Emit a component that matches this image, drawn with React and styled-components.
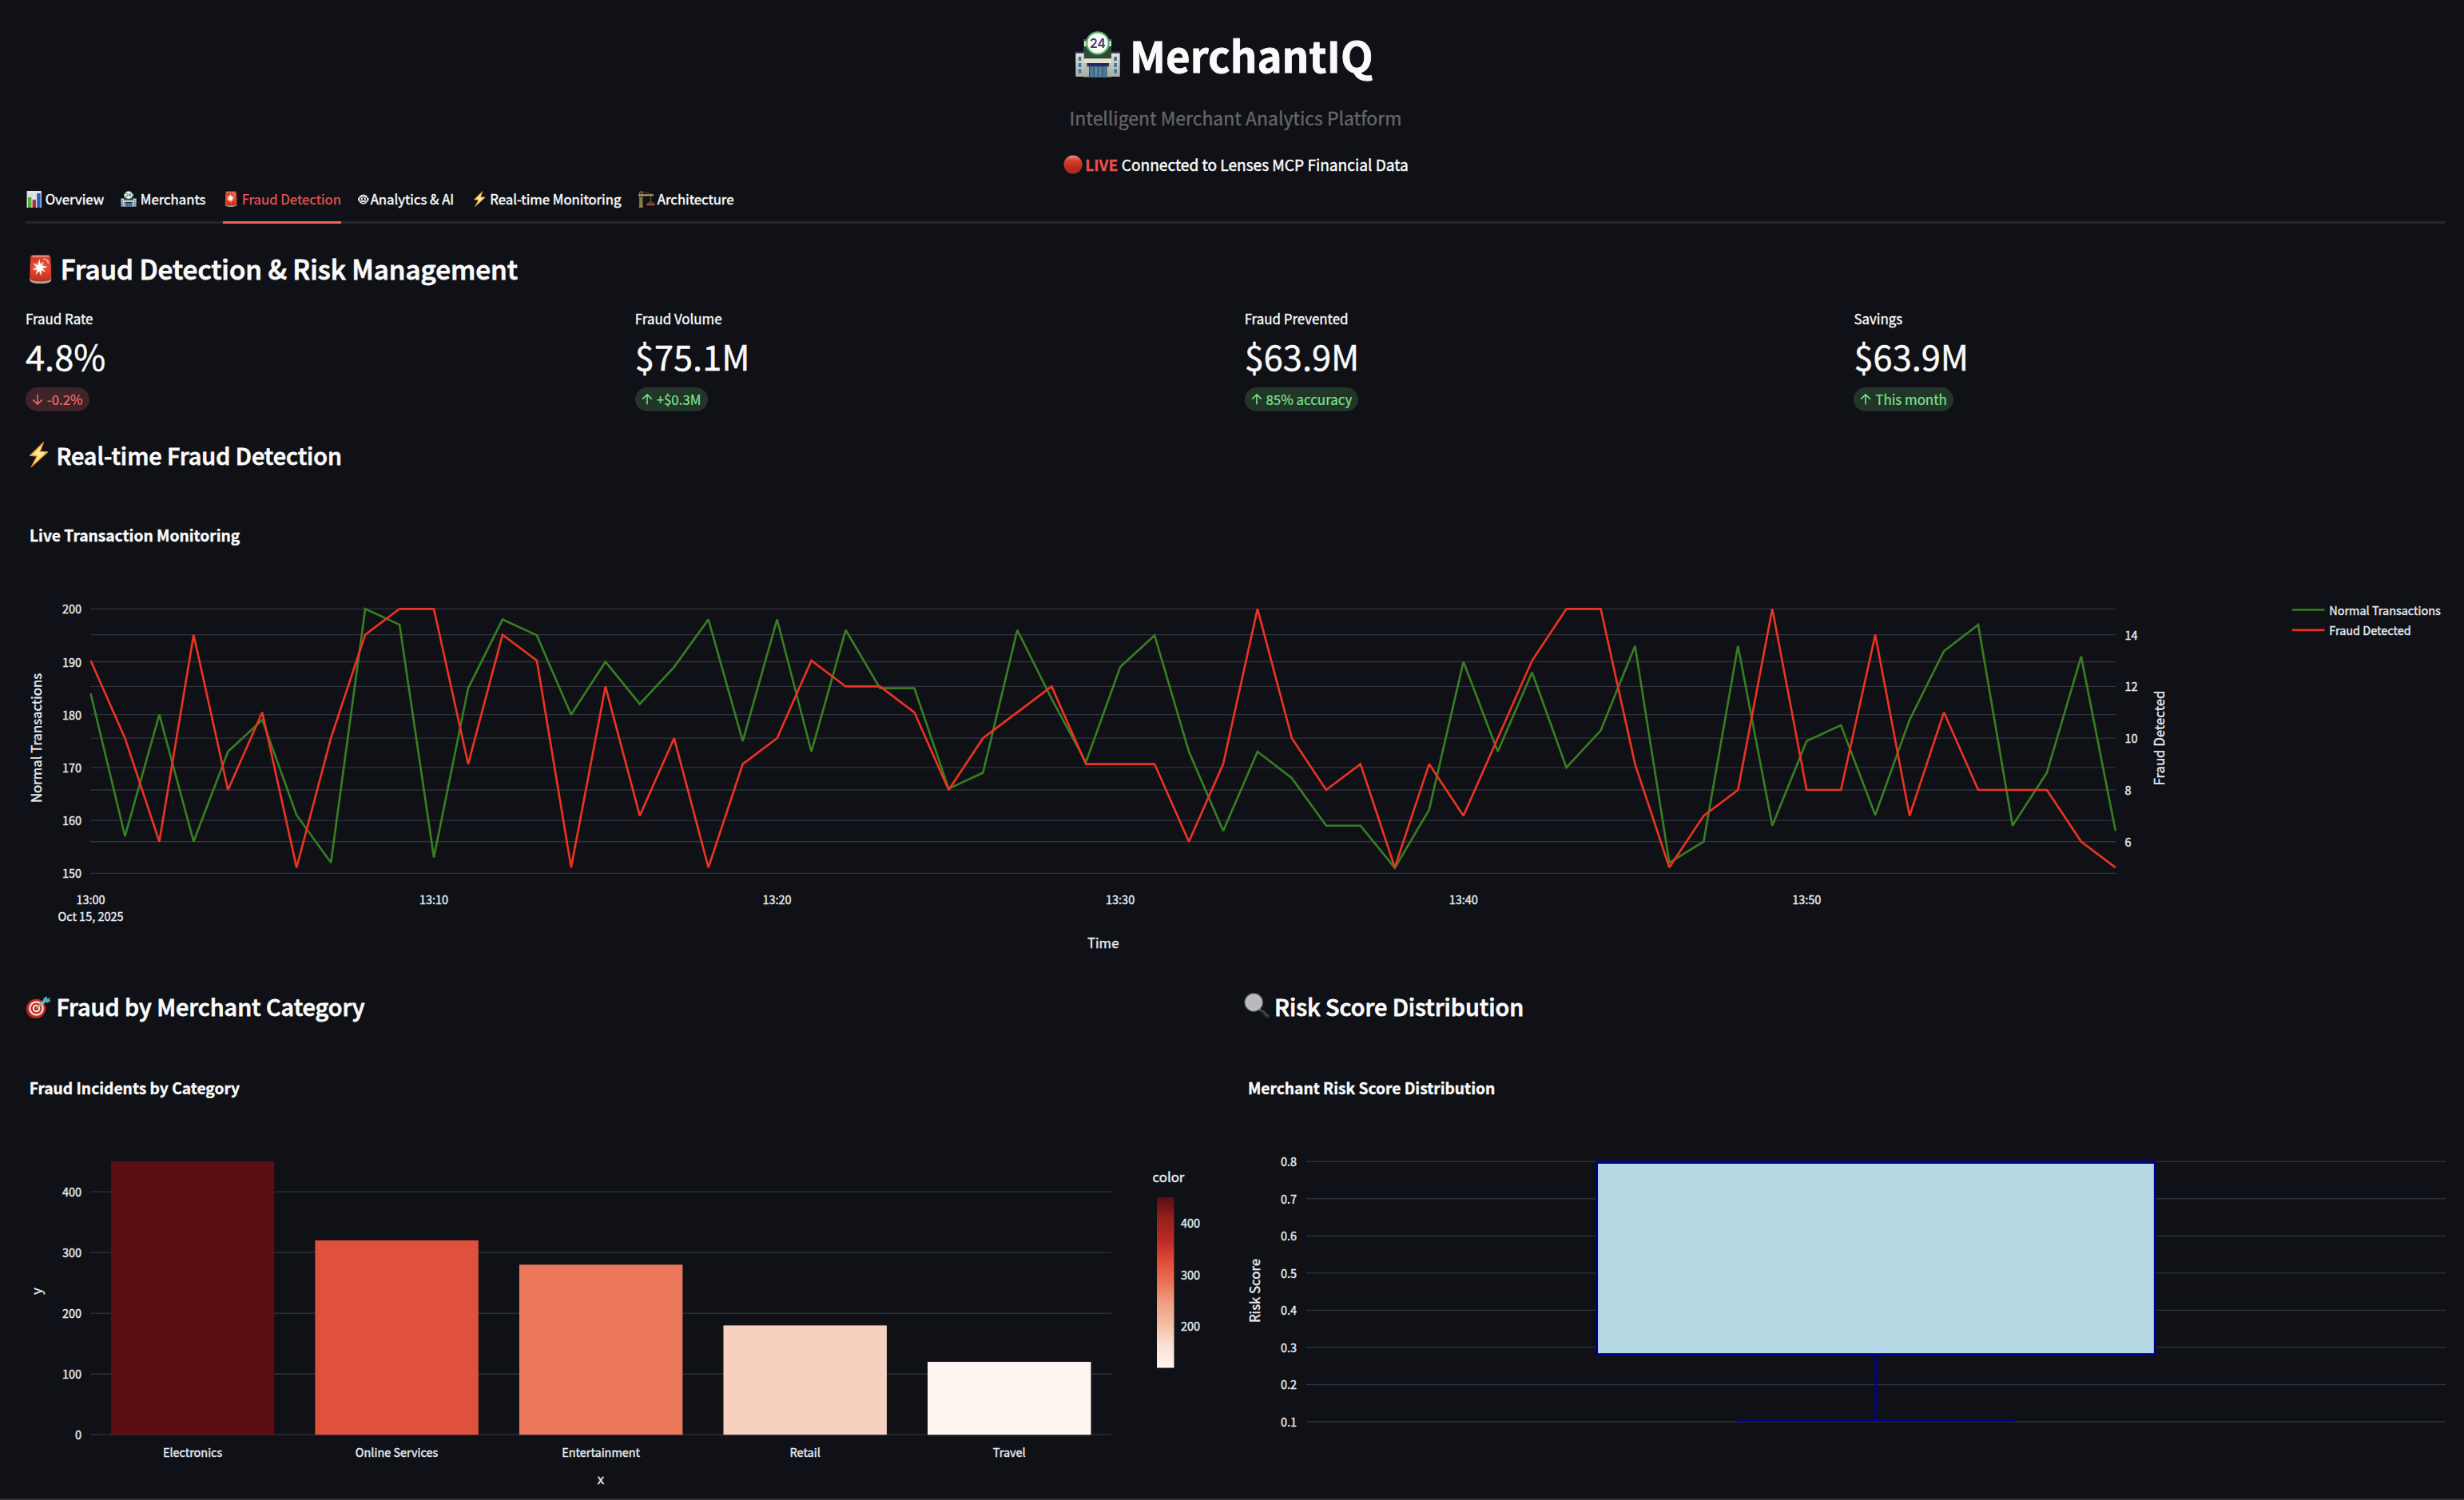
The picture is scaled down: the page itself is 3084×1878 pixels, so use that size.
import React from 'react';
import styled, { createGlobalStyle } from 'styled-components';

const FONT = '"Noto Sans CJK SC", "Noto Sans", sans-serif';

const GlobalStyle = createGlobalStyle`
  * { box-sizing: border-box; }
  body {
    margin: 0;
    background: #0f1116;
    color: #fafafa;
    font-family: ${FONT};
    overflow: hidden;
  }
  h1, h2, h3, p { margin: 0; font-weight: inherit; }
`;

/* ---------- page parts ---------- */

const Page = styled.main`
  display: flex;
  flex-direction: column;
  height: 1878px;
`;

const Content = styled.div`
  flex: 1;
  min-height: 0;
  padding: 33px 24px 0 32px;
  overflow: hidden;
`;

const BottomEdge = styled.footer`
  flex: none;
  height: 2px;
  background: #2f2f30;
`;

const Header = styled.header`
  display: flex;
  flex-direction: column;
  align-items: center;
`;

const Title = styled.h1`
  display: flex;
  align-items: center;
  gap: 10.6px;
  height: 70px;
  padding-right: 28px;
  font-size: 52.7px;
  line-height: 70px;
  font-weight: 700;
  white-space: nowrap;
  -webkit-text-stroke: 0.8px currentColor;
`;

const Subtitle = styled.p`
  margin-top: 28px;
  padding-left: 1px;
  font-size: 22.95px;
  line-height: 32px;
  color: #666666;
  -webkit-text-stroke: 0.35px currentColor;
`;

const LiveLine = styled.p`
  display: flex;
  align-items: center;
  margin-top: 26.6px;
  padding-left: 1.5px;
  font-size: 19.1px;
  line-height: 32px;
  -webkit-text-stroke: 0.45px currentColor;
`;

const LiveTag = styled.strong`
  margin: 0 4.6px 0 3.6px;
  color: #eb5048;
  font-weight: 700;
  -webkit-text-stroke: 0.3px currentColor;
`;

const Tabs = styled.nav`
  display: flex;
  gap: 21.3px;
  height: 58.4px;
  width: 3028px;
  box-shadow: inset 0 -3px 0 #26272e;
`;

const Tab = styled.a`
  display: flex;
  align-items: center;
  gap: ${(p) => p.$gap ?? 4}px;
  border-bottom: 3px solid ${(p) => (p.$active ? '#ee6560' : 'transparent')};
  color: ${(p) => (p.$active ? '#ee5550' : '#fafafa')};
  font-size: 16.75px;
  white-space: nowrap;
  -webkit-text-stroke: ${(p) => (p.$active ? 0.25 : 0.45)}px currentColor;
`;

const SectionTitle = styled.h2`
  display: flex;
  align-items: center;
  gap: 6.7px;
  margin-top: 34.5px;
  height: 44px;
  font-size: 33.2px;
  line-height: 44px;
  font-weight: 500;
  -webkit-text-stroke: 0.9px currentColor;
`;

const Subheading = styled.h3`
  display: flex;
  align-items: center;
  gap: 6.4px;
  height: 40px;
  padding-bottom: 1px;
  font-size: 28.8px;
  line-height: 39px;
  font-weight: 500;
  -webkit-text-stroke: 0.8px currentColor;
`;

const Metrics = styled.section`
  display: grid;
  grid-template-columns: repeat(4, 1fr);
  gap: 21.33px;
  width: 3030px;
  margin: 26px 0 35px;
`;

const Metric = styled.div`
  display: flex;
  flex-direction: column;
  align-items: flex-start;
`;

const MetricLabel = styled.span`
  padding-top: 1px;
  font-size: 16.9px;
  line-height: 28px;
  -webkit-text-stroke: 0.35px currentColor;
`;

const MetricValue = styled.span`
  margin-top: 2.5px;
  font-size: 43.4px;
  line-height: 58px;
  -webkit-text-stroke: 0.4px currentColor;
`;

const Delta = styled.span`
  display: flex;
  align-items: center;
  gap: 4.8px;
  height: 30px;
  margin-top: 11px;
  padding: 0 8px;
  border-radius: 15px;
  font-size: 16.9px;
  color: ${(p) => (p.$down ? '#ee6b6b' : '#7ce38b')};
  background: ${(p) => (p.$down ? '#3e2428' : '#213629')};
  -webkit-text-stroke: 0.2px currentColor;
`;

const Panels = styled.section`
  display: grid;
  grid-template-columns: repeat(2, 1fr);
  gap: 21.33px;
  width: 3028px;
`;

const Chart = styled.svg`
  display: block;
  overflow: visible;
  font-family: ${FONT};
`;

const ChartTitle = styled.text`
  font-size: 19.2px;
  font-weight: 700;
  fill: #fafafa;
  stroke: #fafafa;
  stroke-width: 0.35px;
`;

const Tick = styled.text`
  font-size: 14.45px;
  fill: #e6eaf1;
  stroke: #e6eaf1;
  stroke-width: 0.4px;
`;

const AxisTitle = styled(Tick)`
  font-size: 16.8px;
`;

const Grid = styled.line`
  stroke: #31333f;
  stroke-width: 1.33px;
`;

const Icon = styled.svg`
  display: block;
  flex: none;
`;

/* ---------- icons ---------- */

const StoreIcon = ({ size }) => (
  <Icon width={size} height={size} viewBox="0 0 57 58">
    <defs>
      <linearGradient id="wall" x1="0" y1="0" x2="0" y2="1">
        <stop offset="0" stopColor="#e6e6da" />
        <stop offset="1" stopColor="#a9aca6" />
      </linearGradient>
    </defs>
    <rect x="0.8" y="27" width="11" height="30" fill="url(#wall)" />
    <rect x="45" y="27" width="11.2" height="30" fill="url(#wall)" />
    <rect x="0" y="25.6" width="12" height="2.2" fill="#35346a" />
    <rect x="45" y="25.6" width="12" height="2.2" fill="#35346a" />
    <rect x="11.3" y="11" width="34.2" height="46.5" fill="url(#wall)" />
    <rect x="10.8" y="10" width="35.4" height="2.4" fill="#4a4d78" />
    <rect x="11.3" y="19" width="34.2" height="15.5" fill="#2f4a35" />
    <rect x="11.3" y="34.5" width="34.2" height="5.5" fill="#e2e2d2" />
    <rect x="17.5" y="43" width="22.5" height="14.8" fill="#2d4a5e" />
    <rect x="18.6" y="43" width="4.6" height="14.8" fill="#4a7a9c" />
    <rect x="24.2" y="43" width="4.2" height="14.8" fill="#5585a5" />
    <rect x="29.4" y="43" width="4.2" height="14.8" fill="#5585a5" />
    <rect x="34.6" y="43" width="4.6" height="14.8" fill="#4a7a9c" />
    <rect x="15" y="40" width="27.4" height="4.2" fill="#28285c" />
    {[32, 40, 47.6].map((y) => (
      <g key={y} fill="#3b74a6">
        <rect x="4.2" y={y} width="3.6" height="5" />
        <rect x="48.8" y={y} width="3.6" height="5" />
      </g>
    ))}
    <circle cx="28.4" cy="15" r="13.7" fill="#fbfbf8" stroke="#56b566" strokeWidth="2.2" />
    <text x="28.4" y="20.6" textAnchor="middle" fontFamily="Inter, sans-serif" fontSize="15.5" fontWeight="600" fill="#3a3a68" stroke="none" style={{ WebkitTextStroke: '0' }}>24</text>
  </Icon>
);

const SirenIcon = ({ size }) => (
  <Icon width={size} height={size} viewBox="0 0 37 37">
    <defs>
      <linearGradient id="lamp" x1="0" y1="0" x2="0" y2="1">
        <stop offset="0" stopColor="#c93a28" />
        <stop offset="0.5" stopColor="#e8492f" />
        <stop offset="1" stopColor="#b9301f" />
      </linearGradient>
      <radialGradient id="glow">
        <stop offset="0" stopColor="#fff" stopOpacity="0.9" />
        <stop offset="1" stopColor="#f58a72" stopOpacity="0" />
      </radialGradient>
    </defs>
    <path d="M5.2 30h27v2.5c0 3-6 4.7-13.5 4.7S5.2 35.5 5.2 32.5z" fill="#a6a6a2" />
    <path d="M6 4.5C6 2 8 1 11 1h15.5c3 0 5 1 5 3.5l.8 25.5c0 3-5.5 4.4-13.5 4.4S5.2 33 5.2 30z" fill="url(#lamp)" />
    <rect x="8" y="2" width="21.5" height="2.2" rx="1.1" fill="#f0a090" opacity="0.7" />
    <circle cx="17.5" cy="16.5" r="9" fill="url(#glow)" />
    <path d="M17.5 6l1.1 7.400 4.300-4-2.600 5.400 7.500 1.100-7 2 5 5.100-6-2.900-.3 7.900-2.500-7.100-4.500 5.600 2.200-6.900-6.400.2 5.800-3.200-5.500-5.300 6.800 3z" fill="#fff" />
    <path d="M23 6.500c3 .3 5 2 5.500 4.500" stroke="#f6c2b8" strokeWidth="2.200" fill="none" strokeLinecap="round" opacity="0.8" />
  </Icon>
);

const BoltIcon = ({ size }) => (
  <Icon width={size} height={size} viewBox="0 0 32 32">
    <defs>
      <linearGradient id="bolt" x1="0" y1="0" x2="1" y2="1">
        <stop offset="0" stopColor="#f3a72e" />
        <stop offset="0.5" stopColor="#fff0a0" />
        <stop offset="1" stopColor="#f0a030" />
      </linearGradient>
    </defs>
    <path d="M22.5 0.8L5.4 17.5l9 .6L7.2 31.5 27.8 12.8l-9.600-.6z" fill="url(#bolt)" stroke="#e39124" strokeWidth="1.2" strokeLinejoin="round" />
  </Icon>
);

const BarChartIcon = () => (
  <Icon width="20" height="21" viewBox="0 0 20 21">
    <rect x="1.6" y="0" width="18.2" height="21" fill="#dde4f0" />
    <path d="M1.600 5h18.200M1.600 10.500h18.200M1.600 16h18.200" stroke="#c3cede" strokeWidth="0.7" />
    <rect x="3" y="7.8" width="4.4" height="13.2" fill="#4fae3c" />
    <rect x="8.6" y="11.2" width="4.4" height="9.8" fill="#b02c2c" />
    <rect x="14.2" y="3" width="4.4" height="18" fill="#2a5cb8" />
  </Icon>
);

const RobotIcon = () => (
  <Icon width="14" height="14" viewBox="0 0 14 14">
    <ellipse cx="6.8" cy="7.5" rx="5.2" ry="5.300" fill="none" stroke="#f4f4f4" strokeWidth="1.4" />
    <path d="M3 4.400h7.600M0.900 5.800v3.400M12.700 5.800v3.400" stroke="#f4f4f4" strokeWidth="1.500" />
    <path d="M3.400 9.500c1.800 1.700 5 1.700 6.800 0z" fill="#f4f4f4" stroke="#f4f4f4" strokeWidth="1" />
    <circle cx="4.800" cy="7" r="1.200" fill="#f4f4f4" />
    <circle cx="8.800" cy="7" r="1.200" fill="#f4f4f4" />
  </Icon>
);

const CraneIcon = () => (
  <Icon width="21" height="21" viewBox="0 0 21 21">
    <path d="M1.8 20.5V1.5L4.8 1v19.500M1.800 8l3 3-3 3 3 3-3 3M4.800 8l-3 3 3 3-3 3 3 3" stroke="#9a8352" strokeWidth="1.1" fill="none" />
    <path d="M0 4.200h19v2.200H0z" fill="#b0975c" />
    <path d="M3.300 1L17.500 4.200" stroke="#6f6242" strokeWidth="0.7" />
    <path d="M15.500 6v9.500M12 15.500l3.500-2.500 3.500 2.500" stroke="#80714e" strokeWidth="0.8" fill="none" />
    <rect x="10.2" y="15.6" width="10.4" height="2.6" fill="#a14a3a" />
    <rect x="0.8" y="18.5" width="5" height="2.5" fill="#8a7a55" />
  </Icon>
);

const TargetIcon = () => (
  <Icon width="32" height="32" viewBox="0 0 32 32">
    <ellipse cx="12.5" cy="20.5" rx="12" ry="12" fill="#8e1d17" />
    <circle cx="13.5" cy="19.5" r="11.7" fill="#c42c22" />
    <circle cx="13.5" cy="19.5" r="9.3" fill="#efe6e2" />
    <circle cx="13.5" cy="19.5" r="7" fill="#c42c22" />
    <circle cx="13.5" cy="19.5" r="4.8" fill="#efe6e2" />
    <circle cx="13.5" cy="19.5" r="2.7" fill="#b0342a" />
    <path d="M13.5 19.5L21 12.5" stroke="#c99b48" strokeWidth="1.8" />
    <path d="M18.5 14.8L24 10" stroke="#6fc0cf" strokeWidth="3.6" />
    <path d="M22 11.5l.3-4.500 4.500-2.800.2 3.300 4.700-1.500-2.200 3 2.300 1-4.300 2.600z" fill="#5aa9ba" />
  </Icon>
);

const SearchIcon = () => (
  <Icon width="32" height="32" viewBox="0 0 32 32">
    <path d="M19.5 20.5l3 3" stroke="#74797d" strokeWidth="3" />
    <path d="M22.8 23.2l7 6.800" stroke="#25282c" strokeWidth="5" strokeLinecap="round" />
    <path d="M23.5 22.6l6.500 6.300" stroke="#5b6269" strokeWidth="1.2" strokeLinecap="round" />
    <circle cx="12.2" cy="12" r="11" fill="#b9b9bc" stroke="#6c7880" strokeWidth="1.5" />
    <circle cx="12.2" cy="12" r="9.6" fill="none" stroke="#d5d6d8" strokeWidth="0.8" />
  </Icon>
);

const LiveDot = () => (
  <Icon width="24" height="24" viewBox="0 0 24 24">
    <defs>
      <linearGradient id="dot" x1="0" y1="0" x2="0" y2="1">
        <stop offset="0" stopColor="#ee8f85" />
        <stop offset="0.28" stopColor="#d8402f" />
        <stop offset="0.7" stopColor="#b52a1f" />
        <stop offset="1" stopColor="#a92a20" />
      </linearGradient>
    </defs>
    <circle cx="12" cy="12" r="11.5" fill="url(#dot)" />
  </Icon>
);

const Arrow = ({ down }) => (
  <Icon width="14" height="14" viewBox="0 0 14 14" fill="none" stroke="currentColor" strokeWidth="1.6">
    {down ? <path d="M7 0.8v12M1.2 7.4L7 13l5.800-5.600" /> : <path d="M7 13.2v-12M1.2 6.6L7 1l5.800 5.600" />}
  </Icon>
);

/* ---------- data ---------- */

const TABS = [
  { label: 'Overview', icon: <BarChartIcon />, gap: 4.7 },
  { label: 'Merchants', icon: <StoreIcon size={20} />, gap: 4.4 },
  { label: 'Fraud Detection', icon: <SirenIcon size={20} />, active: true },
  { label: 'Analytics & AI', icon: <RobotIcon />, gap: 1.4 },
  { label: 'Real-time Monitoring', icon: <BoltIcon size={20} />, gap: 3.8 },
  { label: 'Architecture', icon: <CraneIcon />, gap: 3.2 },
];

const METRICS = [
  { label: 'Fraud Rate', value: '4.8%', delta: '-0.2%', down: true },
  { label: 'Fraud Volume', value: '$75.1M', delta: '+$0.3M' },
  { label: 'Fraud Prevented', value: '$63.9M', delta: '85% accuracy' },
  { label: 'Savings', value: '$63.9M', delta: 'This month' },
];

const NORMAL = [
  184, 157, 180, 156, 173, 179, 161, 152, 200, 197, 153, 185, 198, 195, 180, 190, 182, 189, 198, 175,
  198, 173, 196, 185, 185, 166, 169, 196, 183, 171, 189, 195, 173, 158, 173, 168, 159, 159, 151, 162,
  190, 173, 188, 170, 177, 193, 152, 156, 193, 159, 175, 178, 161, 179, 192, 197, 159, 169, 191, 158,
];

const FRAUD = [
  13, 10, 6, 14, 8, 11, 5, 10, 14, 15, 15, 9, 14, 13, 5, 12, 7, 10, 5, 9,
  10, 13, 12, 12, 11, 8, 10, 11, 12, 9, 9, 9, 6, 9, 15, 10, 8, 9, 5, 9,
  7, 10, 13, 15, 15, 9, 5, 7, 8, 15, 8, 8, 14, 7, 11, 8, 8, 8, 6, 5,
];

const CATEGORIES = [
  { name: 'Electronics', value: 450, color: '#5c0d12' },
  { name: 'Online Services', value: 320, color: '#df513c' },
  { name: 'Entertainment', value: 280, color: '#eb785a' },
  { name: 'Retail', value: 180, color: '#f6d1bf' },
  { name: 'Travel', value: 120, color: '#fff5f0' },
];

const SCALE_COLORS = ['#5c0d12', '#95211c', '#b92a26', '#e04c38', '#ea7356', '#efa083', '#f3bfa5', '#fae2d6', '#fff5f0'];

/* ---------- charts ---------- */

function TransactionChart() {
  const left = 81.5;
  const right = 2615.8;
  const step = (right - left) / 59;
  const x = (m) => left + m * step;
  const yNormal = (v) => 172.3 + (200 - v) * 6.62;
  const yFraud = (v) => 172.3 + (15 - v) * 32.38;
  const points = (data, y) => data.map((v, i) => `${x(i).toFixed(2)},${y(v).toFixed(2)}`).join(' ');
  return (
    <Chart width="3028" height="650" viewBox="0 0 3028 650">
      <ChartTitle x="5" y="87.5">Live Transaction Monitoring</ChartTitle>
      {[150, 160, 170, 180, 190, 200].map((v) => (
        <g key={v}>
          <Grid x1={left} x2={right} y1={yNormal(v)} y2={yNormal(v)} />
          <Tick x="70" y={yNormal(v) + 6} textAnchor="end">{v}</Tick>
        </g>
      ))}
      {[6, 8, 10, 12, 14].map((v) => (
        <g key={v}>
          <Grid x1={left} x2={right} y1={yFraud(v)} y2={yFraud(v)} />
          <Tick x="2627.5" y={yFraud(v) + 6}>{v}</Tick>
        </g>
      ))}
      {[0, 10, 20, 30, 40, 50].map((m) => (
        <Tick key={m} x={x(m)} y="542.3" textAnchor="middle">{`13:${String(m).padStart(2, '0')}`}</Tick>
      ))}
      <Tick x={x(0)} y="563.3" textAnchor="middle">Oct 15, 2025</Tick>
      <polyline points={points(NORMAL, yNormal)} fill="none" stroke="#377e22" strokeWidth="2.66" strokeMiterlimit="2" />
      <polyline points={points(FRAUD, yFraud)} fill="none" stroke="#ea3323" strokeWidth="2.66" strokeMiterlimit="2" />
      <AxisTitle x="1348.7" y="597" textAnchor="middle">Time</AxisTitle>
      <AxisTitle transform="translate(19.5 334) rotate(-90)" textAnchor="middle">Normal Transactions</AxisTitle>
      <AxisTitle transform="translate(2677 334) rotate(-90)" textAnchor="middle">Fraud Detected</AxisTitle>
      <path d="M2837 173.500h40.500" stroke="#377e22" strokeWidth="2.66" />
      <path d="M2837 198.800h40.500" stroke="#ea3323" strokeWidth="2.66" />
      <Tick x="2883.3" y="180">Normal Transactions</Tick>
      <Tick x="2883.3" y="205">Fraud Detected</Tick>
    </Chart>
  );
}

function CategoryChart() {
  const left = 81.3;
  const right = 1359;
  const slot = (right - left) / CATEGORIES.length;
  const y = (v) => 516.3 - v * 0.7605;
  return (
    <Chart width="1503" height="596" viewBox="0 0 1503 596">
      <defs>
        <linearGradient id="reds" x1="0" y1="0" x2="0" y2="1">
          {SCALE_COLORS.map((c, i) => <stop key={c} offset={i / 8} stopColor={c} />)}
        </linearGradient>
      </defs>
      <ChartTitle x="4.7" y="90">Fraud Incidents by Category</ChartTitle>
      {[0, 100, 200, 300, 400].map((v) => (
        <g key={v}>
          <Grid x1={left} x2={right} y1={y(v)} y2={y(v)} />
          <Tick x="70" y={y(v) + 6} textAnchor="end">{v}</Tick>
        </g>
      ))}
      {CATEGORIES.map((c, i) => (
        <g key={c.name}>
          <rect x={left + slot * (i + 0.1)} y={y(c.value)} width={slot * 0.8} height={c.value * 0.7605} fill={c.color} />
          <Tick x={left + slot * (i + 0.5)} y="543.5" textAnchor="middle">{c.name}</Tick>
        </g>
      ))}
      <AxisTitle x="720" y="578" textAnchor="middle">x</AxisTitle>
      <AxisTitle transform="translate(19.5 336.5) rotate(-90)" textAnchor="middle">y</AxisTitle>
      <AxisTitle x="1430.5" y="200" textAnchor="middle">color</AxisTitle>
      <rect x="1416" y="219" width="21.5" height="213.5" fill="url(#reds)" />
      {[[400, 251], [300, 315.5], [200, 380]].map(([v, cy]) => (
        <Tick key={v} x="1446" y={cy + 6}>{v}</Tick>
      ))}
    </Chart>
  );
}

function RiskChart() {
  const left = 77.7;
  const right = 1504.3;
  const y = (v) => 174.3 + (0.8 - v) * 465.3;
  return (
    <Chart width="1503" height="596" viewBox="0 0 1503 596">
      <ChartTitle x="5" y="90">Merchant Risk Score Distribution</ChartTitle>
      {[0.1, 0.2, 0.3, 0.4, 0.5, 0.6, 0.7, 0.8].map((v) => (
        <g key={v}>
          <Grid x1={left} x2={right} y1={y(v)} y2={y(v)} />
          <Tick x="66" y={y(v) + 6} textAnchor="end">{v.toFixed(1)}</Tick>
        </g>
      ))}
      <rect x="441.7" y="174.7" width="698.5" height="240.8" fill="#b6d8e4" stroke="#00008b" strokeWidth="2.7" />
      <path d="M440.4 175.700h701" stroke="#00008b" strokeWidth="2.7" />
      <path d="M790.7 416.5V498.5M616.5 498.6H965.5" stroke="#00008b" strokeWidth="2.6" fill="none" />
      <AxisTitle transform="translate(20 336) rotate(-90)" textAnchor="middle">Risk Score</AxisTitle>
    </Chart>
  );
}

export default function App() {
  return (
    <Page>
      <GlobalStyle />
      <Content>
        <Header>
          <Title><StoreIcon size={58} />MerchantIQ</Title>
          <Subtitle>Intelligent Merchant Analytics Platform</Subtitle>
          <LiveLine><LiveDot /><LiveTag>LIVE</LiveTag>Connected to Lenses MCP Financial Data</LiveLine>
        </Header>
        <Tabs>
          {TABS.map((t) => (
            <Tab key={t.label} $active={t.active} $gap={t.gap}>{t.icon}{t.label}</Tab>
          ))}
        </Tabs>
        <SectionTitle><SirenIcon size={37} />Fraud Detection &amp; Risk Management</SectionTitle>
        <Metrics>
          {METRICS.map((m) => (
            <Metric key={m.label}>
              <MetricLabel>{m.label}</MetricLabel>
              <MetricValue>{m.value}</MetricValue>
              <Delta $down={m.down}><Arrow down={m.down} />{m.delta}</Delta>
            </Metric>
          ))}
        </Metrics>
        <Subheading><BoltIcon size={32} />Real-time Fraud Detection</Subheading>
        <TransactionChart />
        <Panels>
          <div>
            <Subheading><TargetIcon />Fraud by Merchant Category</Subheading>
            <CategoryChart />
          </div>
          <div>
            <Subheading><SearchIcon />Risk Score Distribution</Subheading>
            <RiskChart />
          </div>
        </Panels>
      </Content>
      <BottomEdge />
    </Page>
  );
}
